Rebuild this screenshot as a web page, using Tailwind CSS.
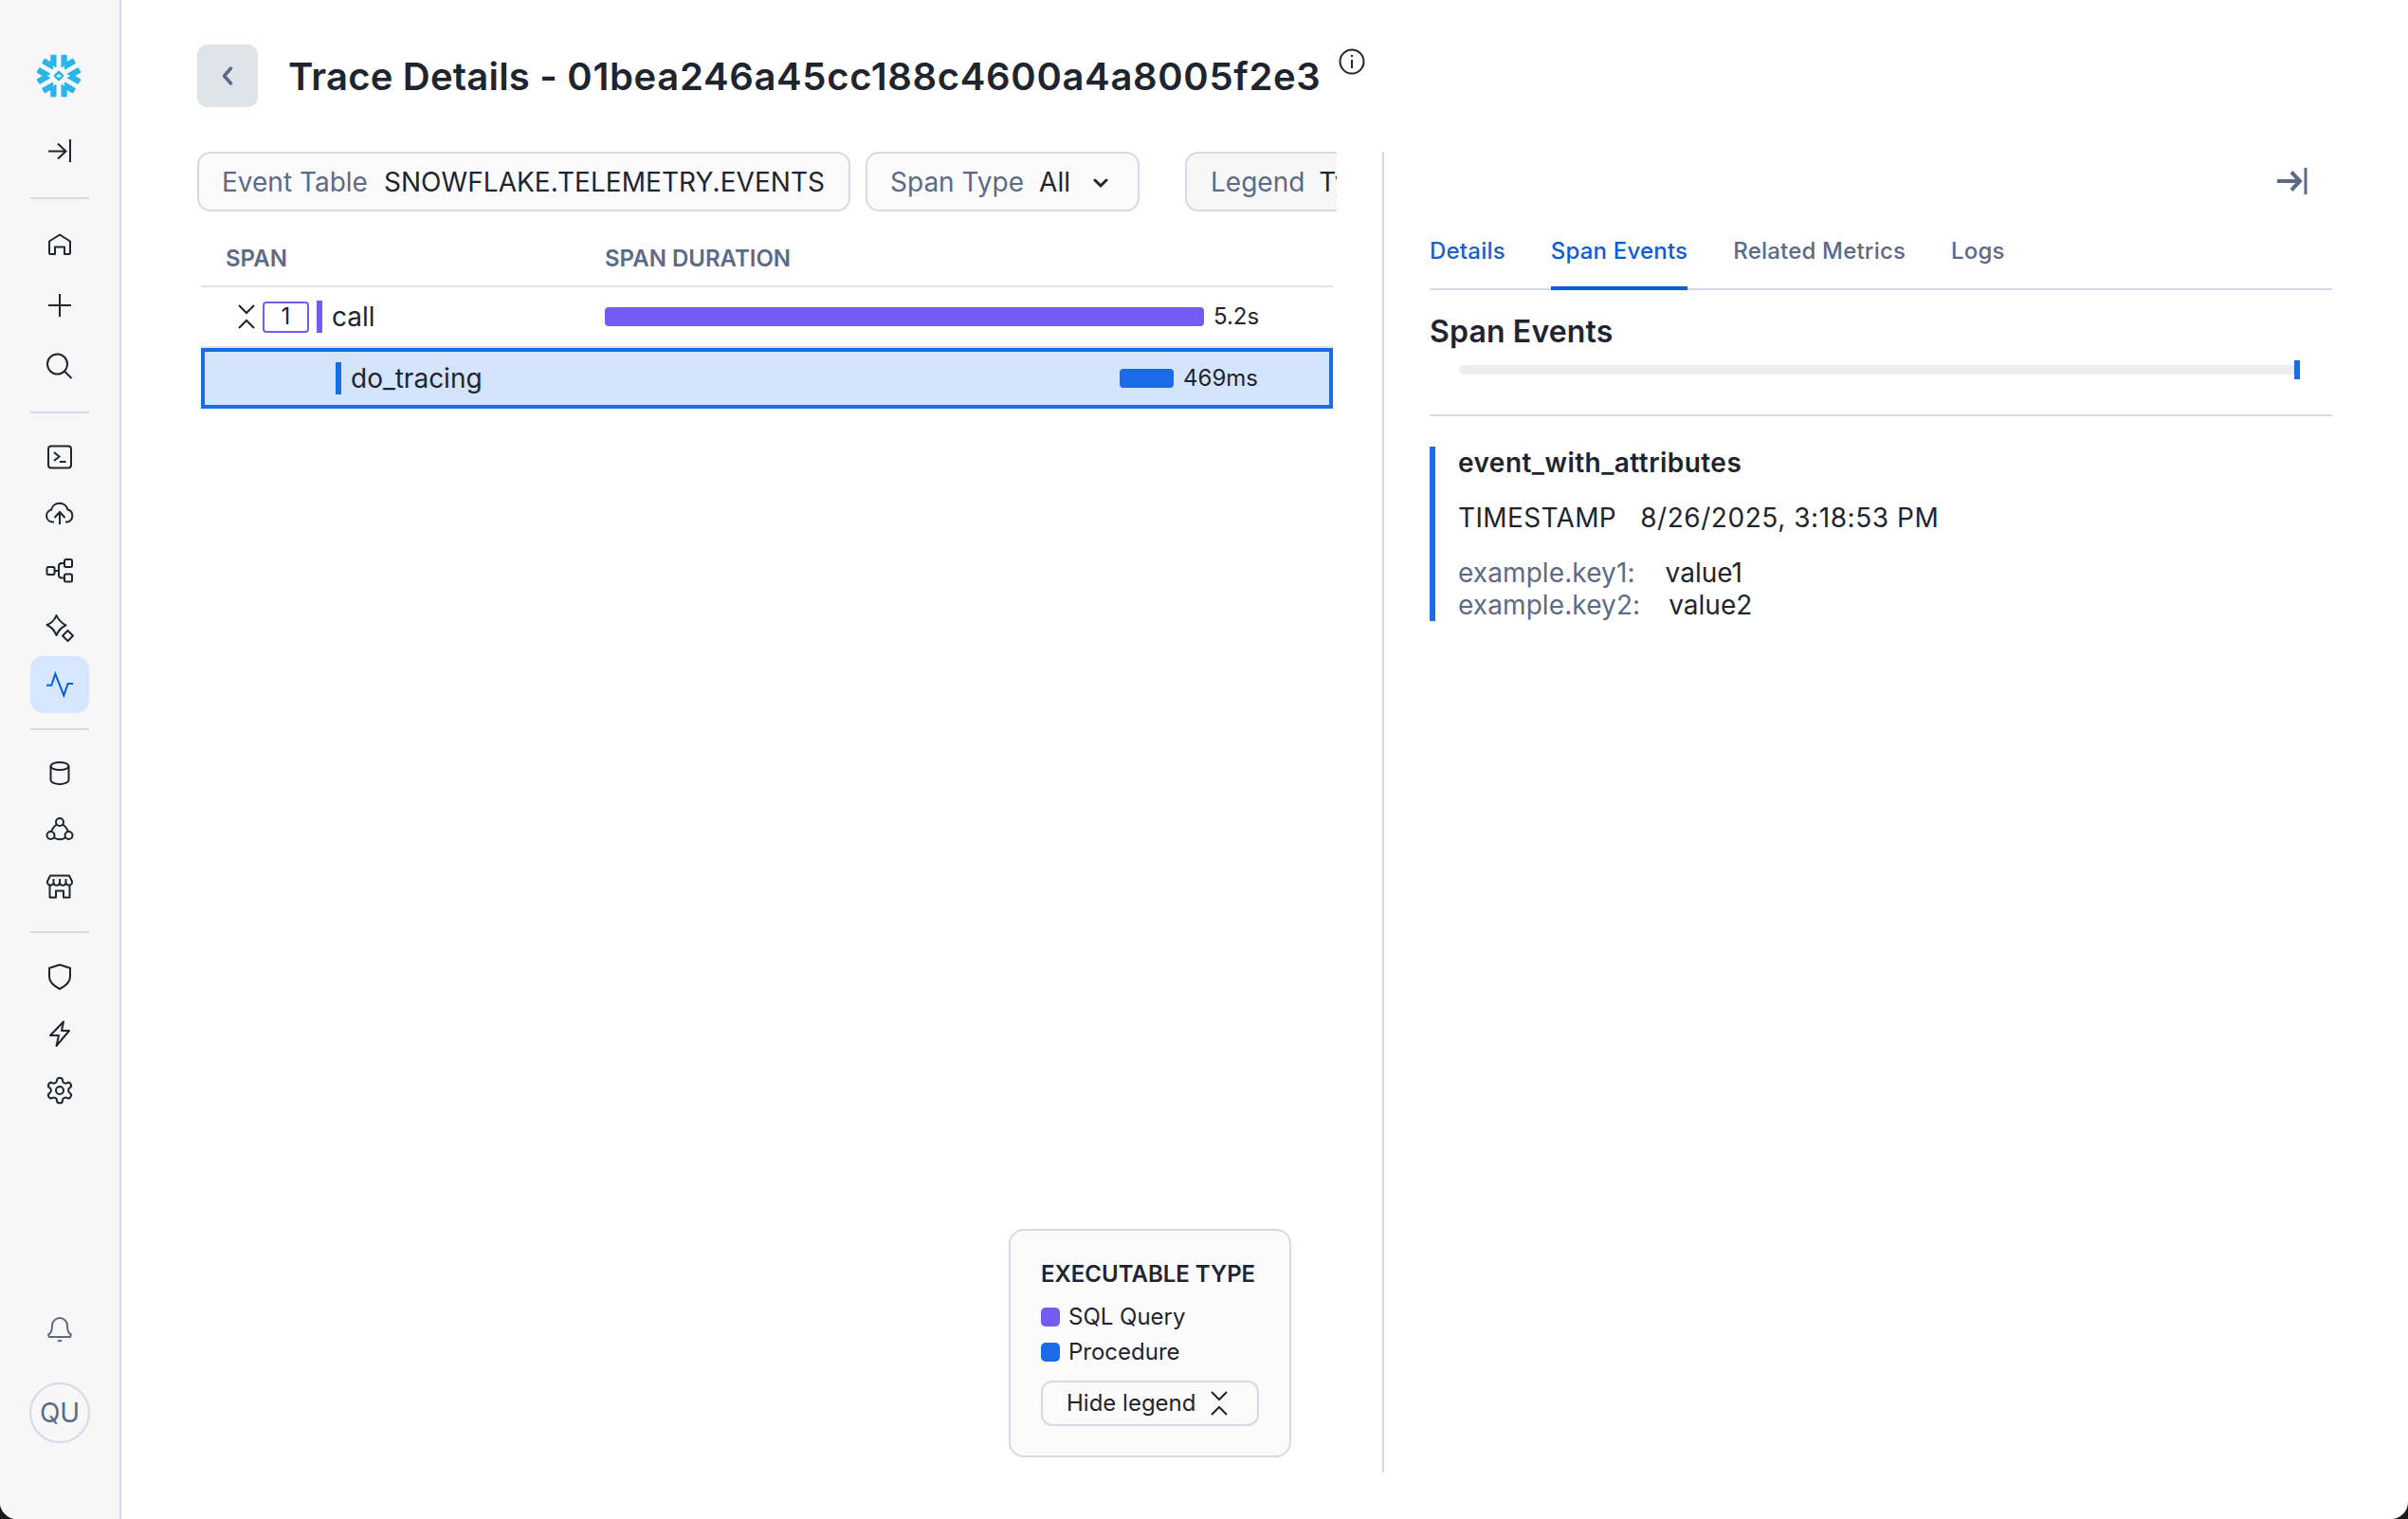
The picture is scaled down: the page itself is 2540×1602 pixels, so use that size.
<!DOCTYPE html>
<html lang="en">
<head>
  <meta charset="UTF-8">
  <meta name="viewport" content="width=device-width, initial-scale=1.0">
  <title>Trace Details</title>
  <script src="https://cdn.jsdelivr.net/npm/@tailwindcss/browser@4"></script>
</head>
<body class="bg-[#1a1a1a] font-[Inter,sans-serif] text-[#1e252f]">
<div class="flex w-[2540px] h-[1602px] bg-white rounded-b-[18px] overflow-hidden">

  <!-- sidebar -->
  <aside class="w-[128px] shrink-0 h-full bg-[#f7f7f8] border-r-2 border-[#d5dae6] flex flex-col items-center text-[#1e252f]">
    <svg class="mt-[56px] -ml-[2px]" width="48" height="48" viewBox="-24 -24 48 48" fill="#29b5e8" stroke="#29b5e8" stroke-width="1.5" stroke-linejoin="round">
      <path d="M-8 -21.5 H-3.2 V-9.5 L-8 -13 Z M8 -21.5 H3.2 V-9.5 L8 -13 Z"/>
      <path transform="rotate(60)" d="M-8 -21.5 H-3.2 V-9.5 L-8 -13 Z M8 -21.5 H3.2 V-9.5 L8 -13 Z"/>
      <path transform="rotate(120)" d="M-8 -21.5 H-3.2 V-9.5 L-8 -13 Z M8 -21.5 H3.2 V-9.5 L8 -13 Z"/>
      <path transform="rotate(180)" d="M-8 -21.5 H-3.2 V-9.5 L-8 -13 Z M8 -21.5 H3.2 V-9.5 L8 -13 Z"/>
      <path transform="rotate(240)" d="M-8 -21.5 H-3.2 V-9.5 L-8 -13 Z M8 -21.5 H3.2 V-9.5 L8 -13 Z"/>
      <path transform="rotate(300)" d="M-8 -21.5 H-3.2 V-9.5 L-8 -13 Z M8 -21.5 H3.2 V-9.5 L8 -13 Z"/>
      <path d="M0 -4 L4 0 L0 4 L-4 0 Z" fill="none" stroke-width="2.5"/>
    </svg>

    <div class="mt-[25px] h-[60px] flex items-center justify-center">
      <svg width="32" height="32" viewBox="0 0 32 32" fill="none" stroke="currentColor" stroke-width="2"><path d="M4 16.5 H22.5 M14 8.5 L22.5 16.5 L14 24.5 M27 4 V28"/></svg>
    </div>
    <div class="mt-[19px] w-[62px] h-[2px] bg-[#d5dae6]"></div>

    <div class="mt-[16px] h-[64px] flex items-center justify-center">
      <svg width="32" height="32" viewBox="0 0 32 32" fill="none" stroke="currentColor" stroke-width="2" stroke-linejoin="round"><path d="M5 12.5 L16 5.5 L27 12.5 V24.5 A1.5 1.5 0 0 1 25.5 26 H21 V18.5 H11 V26 H6.5 A1.5 1.5 0 0 1 5 24.5 Z"/></svg>
    </div>
    <div class="h-[64px] flex items-center justify-center">
      <svg width="32" height="32" viewBox="0 0 32 32" fill="none" stroke="currentColor" stroke-width="2"><path d="M16 4 V28 M4 16 H28"/></svg>
    </div>
    <div class="h-[64px] flex items-center justify-center">
      <svg width="32" height="32" viewBox="0 0 32 32" fill="none" stroke="currentColor" stroke-width="2"><circle cx="13.5" cy="14" r="10.5"/><path d="M21 21.5 L28.5 29"/></svg>
    </div>
    <div class="mt-[16px] w-[62px] h-[2px] bg-[#d5dae6]"></div>

    <div class="mt-[16px] h-[60px] flex items-center justify-center">
      <svg width="32" height="32" viewBox="0 0 32 32" fill="none" stroke="currentColor" stroke-width="2"><rect x="4" y="4.5" width="24" height="23" rx="3"/><path d="M10 11 L15.5 15.5 L10 20 M16 21 H22.5"/></svg>
    </div>
    <div class="h-[60px] flex items-center justify-center">
      <svg width="32" height="32" viewBox="0 0 32 32" fill="none" stroke="currentColor" stroke-width="2"><path d="M10 24.5 H8.5 A6.5 6.5 0 0 1 7 11.7 A9 9 0 0 1 24.5 11.5 A6.7 6.7 0 0 1 24 24.5 H22 M16 27 V14 M10.5 20 L16 14 L21.5 20"/></svg>
    </div>
    <div class="h-[60px] flex items-center justify-center">
      <svg width="32" height="32" viewBox="0 0 32 32" fill="none" stroke="currentColor" stroke-width="2"><rect x="2.5" y="12" width="8" height="8" rx="1.5"/><rect x="21" y="4" width="8" height="8" rx="1.5"/><rect x="21" y="19.5" width="8" height="8" rx="1.5"/><path d="M10.5 16 H15 M21 8 H18 A3 3 0 0 0 15 11 V20.5 A3 3 0 0 0 18 23.5 H21"/></svg>
    </div>
    <div class="h-[60px] flex items-center justify-center">
      <svg width="32" height="32" viewBox="0 0 32 32" fill="none" stroke="currentColor" stroke-width="2" stroke-linejoin="round"><path d="M12.5 3 C14.5 8 17 10.5 22.5 13.5 C17.5 15.5 15 18.5 12.5 24 C10.5 19 8 15.5 2.5 13 C8 11 10.5 8 12.5 3 Z"/><path d="M24.5 19 L30 24.5 L24.5 30 L19 24.5 Z"/></svg>
    </div>
    <div class="h-[60px] w-[62px] rounded-[14px] bg-[#d6e6ff] text-[#0b5cdb] flex items-center justify-center">
      <svg width="32" height="32" viewBox="0 0 32 32" fill="none" stroke="currentColor" stroke-width="2"><path d="M2 16.7 H7.3 L11.3 4.7 L20.3 27.3 L24.7 15 H30"/></svg>
    </div>
    <div class="mt-[16px] w-[62px] h-[2px] bg-[#d5dae6]"></div>

    <div class="mt-[15px] h-[60px] flex items-center justify-center">
      <svg width="32" height="32" viewBox="0 0 32 32" fill="none" stroke="currentColor" stroke-width="2"><ellipse cx="16" cy="9" rx="9.5" ry="4"/><path d="M6.5 9 V23.5 C6.5 26 10.5 28 16 28 S25.5 26 25.5 23.5 V9"/></svg>
    </div>
    <div class="h-[60px] flex items-center justify-center">
      <svg width="32" height="32" viewBox="0 0 32 32" fill="none" stroke="currentColor" stroke-width="2"><circle cx="16" cy="8" r="4"/><circle cx="6.5" cy="22" r="4"/><circle cx="25.5" cy="22" r="4"/><path d="M12.8 10.5 Q8.5 13.5 6.8 18 M19.2 10.5 Q23.5 13.5 25.2 18 M10 24.5 Q16 28 22 24.5"/></svg>
    </div>
    <div class="h-[60px] flex items-center justify-center">
      <svg width="32" height="32" viewBox="0 0 32 32" fill="none" stroke="currentColor" stroke-width="2" stroke-linejoin="round"><path d="M6 4.5 H26 L29 10.5 A3.3 3.3 0 0 1 22.5 12 A3.3 3.3 0 0 1 16 12 A3.3 3.3 0 0 1 9.5 12 A3.3 3.3 0 0 1 3 10.5 Z M9.5 8 V12 M16 8 V12 M22.5 8 V12"/><path d="M5.5 15 V27.5 H12 V20.5 H20 V27.5 H26.5 V15"/></svg>
    </div>
    <div class="mt-[17px] w-[62px] h-[2px] bg-[#d5dae6]"></div>

    <div class="mt-[16px] h-[60px] flex items-center justify-center">
      <svg width="32" height="32" viewBox="0 0 32 32" fill="none" stroke="currentColor" stroke-width="2" stroke-linejoin="round"><path d="M16 3.5 L27 7 V16 C27 22 22 26 16 29 C10 26 5 22 5 16 V7 Z"/></svg>
    </div>
    <div class="h-[60px] flex items-center justify-center">
      <svg width="32" height="32" viewBox="0 0 32 32" fill="none" stroke="currentColor" stroke-width="2" stroke-linejoin="round"><path d="M20 3.5 L6 18 H15 L12.5 29 L26 13 H18 Z"/></svg>
    </div>
    <div class="h-[60px] flex items-center justify-center">
      <svg width="32" height="32" viewBox="0 0 24 24" fill="none" stroke="currentColor" stroke-width="1.5"><path d="M12.22 2h-.44a2 2 0 0 0-2 2v.18a2 2 0 0 1-1 1.73l-.43.25a2 2 0 0 1-2 0l-.15-.08a2 2 0 0 0-2.73.73l-.22.38a2 2 0 0 0 .73 2.73l.15.1a2 2 0 0 1 1 1.72v.51a2 2 0 0 1-1 1.74l-.15.09a2 2 0 0 0-.73 2.73l.22.38a2 2 0 0 0 2.73.73l.15-.08a2 2 0 0 1 2 0l.43.25a2 2 0 0 1 1 1.73V20a2 2 0 0 0 2 2h.44a2 2 0 0 0 2-2v-.18a2 2 0 0 1 1-1.73l.43-.25a2 2 0 0 1 2 0l.15.08a2 2 0 0 0 2.73-.73l.22-.39a2 2 0 0 0-.73-2.73l-.15-.08a2 2 0 0 1-1-1.74v-.5a2 2 0 0 1 1-1.74l.15-.09a2 2 0 0 0 .73-2.73l-.22-.38a2 2 0 0 0-2.73-.73l-.15.08a2 2 0 0 1-2 0l-.43-.25a2 2 0 0 1-1-1.73V4a2 2 0 0 0-2-2z"/><circle cx="12" cy="12" r="3"/></svg>
    </div>

    <div class="mt-auto h-[60px] flex items-center justify-center text-[#5d6a85]">
      <svg width="32" height="32" viewBox="0 0 32 32" fill="none" stroke="currentColor" stroke-width="2" stroke-linejoin="round"><path d="M5.5 20.5 C8 18 8 15 8 12 A8 8 0 0 1 24 12 C24 15 24 18 26.5 20.5 A1.7 1.7 0 0 1 25.5 24 H6.5 A1.7 1.7 0 0 1 5.5 20.5 Z"/><path d="M14 27.5 A2.5 2 0 0 0 18 27.5"/></svg>
    </div>
    <div class="mt-[26px] mb-[80px] w-[64px] h-[64px] rounded-full border-2 border-[#d5dae6] flex items-center justify-center text-[28px] text-[#5d6a85]">QU</div>
  </aside>

  <!-- content -->
  <main class="flex-1 min-w-0 pl-[80px] pt-[47px]">
    <header class="flex items-start h-[66px]">
      <button class="w-[64px] h-[66px] rounded-[10px] bg-[#dfe3ea] flex items-center justify-center">
        <svg width="14" height="22" viewBox="0 0 14 22" fill="none" stroke="#5d6a85" stroke-width="3.5" stroke-linecap="round" stroke-linejoin="round"><path d="M10.5 3 L3.5 11 L10.5 19"/></svg>
      </button>
      <h1 class="ml-[32px] pt-[1px] text-[40px] leading-[66px] font-semibold whitespace-nowrap"><span class="tracking-[0.2px]">Trace Details - </span><span class="tracking-[0.66px]">01bea246a45cc188c4600a4a8005f2e3</span></h1>
      <svg class="ml-[19px] mt-[4px]" width="28" height="28" viewBox="0 0 28 28" fill="none" stroke="#1e252f" stroke-width="2"><circle cx="14" cy="14" r="12.5"/><path d="M14 12 V21"/><circle cx="14" cy="8" r="1.2" fill="#1e252f" stroke="none"/></svg>
    </header>

    <div class="mt-[47px] flex h-[1393px]">
      <!-- trace table -->
      <section class="relative w-[1202px] shrink-0">
        <div class="flex gap-[16px] overflow-hidden text-[28px] h-[63px] whitespace-nowrap">
          <div class="h-[63px] w-[689px] shrink-0 rounded-[14px] border-2 border-[#d5dae6] bg-[#fbfbfc] pl-[24px] flex items-center">
            <span class="text-[#5d6a85]">Event Table</span><span class="ml-[17px] tracking-[0.05px]">SNOWFLAKE.TELEMETRY.EVENTS</span>
          </div>
          <div class="h-[63px] w-[289px] shrink-0 rounded-[14px] border-2 border-[#d5dae6] bg-[#fbfbfc] pl-[24px] flex items-center">
            <span class="text-[#5d6a85]">Span Type</span><span class="ml-[16px]">All</span>
            <svg class="ml-[24px] mt-[2px]" width="16" height="10" viewBox="0 0 16 10" fill="none" stroke="#1e252f" stroke-width="3" stroke-linecap="round" stroke-linejoin="round"><path d="M2 2 L8 8 L14 2"/></svg>
          </div>
          <div class="ml-[32px] h-[63px] w-[260px] shrink-0 rounded-[14px] border-2 border-[#d5dae6] bg-[#f7f7f8] pl-[25px] flex items-center">
            <span class="text-[#5d6a85]">Legend</span><span class="ml-[15px]">Type</span>
          </div>
        </div>

        <div class="ml-[4px] mt-[18px] w-[1194px]">
          <div class="grid grid-cols-[426px_1fr] h-[62px] pt-[3px] items-center border-b-2 border-[#dfe3ea] text-[24px] font-semibold text-[#5d6a85]">
            <div class="pl-[26px]">SPAN</div>
            <div>SPAN DURATION</div>
          </div>
          <div class="grid grid-cols-[426px_1fr] h-[64px] items-center border-b-2 border-[#e2e2e2]">
            <div class="pl-[39px] flex items-center">
              <svg width="18" height="26" viewBox="0 0 18 26" fill="none" stroke="#1e252f" stroke-width="2"><path d="M1 1 L9 9 L17 1 M1 25 L9 17 L17 25"/></svg>
              <div class="ml-[8px] w-[49px] h-[33px] rounded-[4px] border-2 border-[#735cf6] flex items-center justify-center text-[24px]">1</div>
              <div class="ml-[8px] w-[6px] h-[34px] bg-[#735cf6]"></div>
              <span class="ml-[10px] text-[28px]">call</span>
            </div>
            <div class="flex items-center">
              <div class="w-[632px] h-[20px] rounded-[4px] bg-[#735cf6]"></div>
              <span class="ml-[10px] text-[24px]">5.2s</span>
            </div>
          </div>
          <div class="grid grid-cols-[422px_1fr] h-[64px] items-center border-4 border-[#1a6ce7] bg-[#d4e4fd]">
            <div class="pl-[138px] flex items-center">
              <div class="w-[6px] h-[34px] bg-[#1a6ce7]"></div>
              <span class="ml-[10px] text-[28px]">do_tracing</span>
            </div>
            <div class="pl-[543px] flex items-center">
              <div class="w-[57px] h-[20px] rounded-[4px] bg-[#1a6ce7]"></div>
              <span class="ml-[10px] text-[24px]">469ms</span>
            </div>
          </div>
        </div>

        <!-- legend floats over the table area -->
        <div class="absolute left-[856px] bottom-[16px] w-[298px] h-[241px] rounded-[16px] border-2 border-[#d5dae6] bg-[#fbfbfc] pl-[32px] pt-[30px]">
          <div class="text-[24px] leading-[32px] font-semibold">EXECUTABLE TYPE</div>
          <div class="mt-[17px] flex items-center h-[24px] text-[24px]"><span class="w-[20px] h-[20px] rounded-[5px] bg-[#735cf6]"></span><span class="ml-[9px]">SQL Query</span></div>
          <div class="mt-[13px] flex items-center h-[24px] text-[24px]"><span class="w-[20px] h-[20px] rounded-[5px] bg-[#1a6ce7]"></span><span class="ml-[9px]">Procedure</span></div>
          <div class="mt-[18px] w-[230px] h-[48px] rounded-[12px] border-2 border-[#d5dae6] pl-[25px] flex items-center text-[24px]">
            <span>Hide legend</span>
            <svg class="ml-[16px]" width="18" height="26" viewBox="0 0 18 26" fill="none" stroke="#1e252f" stroke-width="2"><path d="M1 1 L9 9 L17 1 M1 25 L9 17 L17 25"/></svg>
          </div>
        </div>
      </section>

      <!-- span panel -->
      <section class="ml-[48px] flex-1 min-w-0 border-l-2 border-[#d5dae6] pl-[48px] pr-[80px] pt-[17px]">
        <div class="flex justify-end mr-[-54px] pr-[80px] h-[28px]">
          <svg width="32" height="28" viewBox="0 0 32 28" fill="none" stroke="#5d6a85" stroke-width="4"><path d="M0 14 H24 M15 4.5 L24 14 L15 23.5"/><path d="M30 0 V28" stroke-width="3"/></svg>
        </div>
        <nav class="mt-[44px] flex gap-[48px] border-b-2 border-[#d5dae6] text-[24px] leading-[32px] font-medium tracking-[0.2px] text-[#5d6a85]">
          <div class="h-[57px] -mb-[2px] text-[#1a5fc9]">Details</div>
          <div class="h-[57px] -mb-[2px] text-[#0b5cdb] border-b-4 border-[#0b5cdb]">Span Events</div>
          <div class="h-[57px] -mb-[2px]">Related Metrics</div>
          <div class="h-[57px] -mb-[2px]">Logs</div>
        </nav>
        <h2 class="mt-[24px] text-[32px] leading-[40px] font-semibold tracking-[0.15px]">Span Events</h2>
        <div class="relative mt-[10px] ml-[31px] w-[888px] h-[20px] flex items-center">
          <div class="w-full h-[10px] rounded-[5px] bg-[#eceef1]"></div>
          <div class="absolute right-[1px] top-0 w-[6px] h-[20px] bg-[#1a6ce7]"></div>
        </div>
        <div class="mt-[37px] border-t-2 border-[#d5dae6]"></div>
        <div class="mt-[32px] h-[184px] border-l-[6px] border-[#1a6ce7] pl-[24px] text-[28px] leading-[34px]">
          <div class="font-semibold tracking-[0.46px]">event_with_attributes</div>
          <div class="mt-[24px]"><span class="tracking-[0.36px]">TIMESTAMP</span><span class="ml-[25px] tracking-[0.56px]">8/26/2025, 3:18:53 PM</span></div>
          <div class="mt-[24px]"><span class="text-[#5d6a85] tracking-[0.1px]">example.key1:</span><span class="ml-[32px]">value1</span></div>
          <div><span class="text-[#5d6a85] tracking-[0.1px]">example.key2:</span><span class="ml-[30px]">value2</span></div>
        </div>
      </section>
    </div>
  </main>
</div>
</body>
</html>
